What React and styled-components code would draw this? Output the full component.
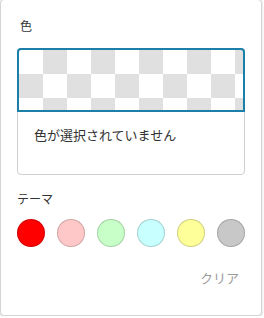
import React from "react";
import styled, { createGlobalStyle } from "styled-components";

const Global = createGlobalStyle`
  html, body { margin: 0; padding: 0; background: #fff; }
  body { font-family: "Noto Sans CJK JP", "Noto Sans", sans-serif; color: #333; }
`;

const Panel = styled.div`
  box-sizing: border-box;
  width: 262px;
  height: 317px;
  margin-top: -1px;
  border: 1px solid #d4d4d4;
  border-radius: 4px;
  box-shadow: 0 1px 3px rgba(0, 0, 0, 0.18);
  background: #fff;
  padding: 18px 16px 0;
  display: flex;
  flex-direction: column;
`;

const Label = styled.div`
  font-size: 12px;
  line-height: 16px;
  margin-top: ${(p) => p.$top || 0}px;
  padding-left: ${(p) => p.$indent || 0}px;
  color: #333;
`;

const Card = styled.div`
  margin-top: ${(p) => p.$top}px;
  border: 1px solid #cfcfcf;
  border-radius: 4px;
  display: flex;
  flex-direction: column;
`;

const Preview = styled.div`
  box-sizing: border-box;
  height: 64px;
  margin: -1px -1px 0;
  border: 2px solid #1b7fa8;
  border-radius: 4px 4px 0 0;
  background-color: #fff;
  background-image: conic-gradient(
    #e0e0e0 0 25%,
    #fff 0 50%,
    #e0e0e0 0 75%,
    #fff 0 100%
  );
  background-size: 48px 48px;
  background-origin: padding-box;
`;

const Message = styled.div`
  padding: 14px 16px 30px;
  font-size: 13px;
  line-height: 18px;
  color: #333;
`;

const Swatches = styled.div`
  margin-top: 12px;
  display: flex;
  gap: 12px;
`;

const Swatch = styled.button`
  box-sizing: border-box;
  width: 28px;
  height: 28px;
  padding: 0;
  border-radius: 50%;
  border: 1px solid rgba(0, 0, 0, 0.18);
  background: ${(p) => p.$color};
  cursor: pointer;
`;

const Footer = styled.div`
  margin-top: 22px;
  display: flex;
  justify-content: flex-end;
`;

const ClearButton = styled.button`
  border: none;
  background: none;
  padding: 0 6px 0 0;
  font-family: inherit;
  font-size: 13px;
  line-height: 18px;
  color: #9a9a9a;
  cursor: pointer;
`;

const colors = ["#ff0000", "#ffc8c8", "#c8ffc8", "#c8ffff", "#ffff99", "#c8c8c8"];

export default function App() {
  return (
    <>
      <Global />
      <Panel>
        <Label $indent={3}>色</Label>
        <Card $top={14}>
          <Preview />
          <Message>色が選択されていません</Message>
        </Card>
        <Label $top={16}>テーマ</Label>
        <Swatches>
          {colors.map((c) => (
            <Swatch key={c} $color={c} aria-label={c} />
          ))}
        </Swatches>
        <Footer>
          <ClearButton>クリア</ClearButton>
        </Footer>
      </Panel>
    </>
  );
}
